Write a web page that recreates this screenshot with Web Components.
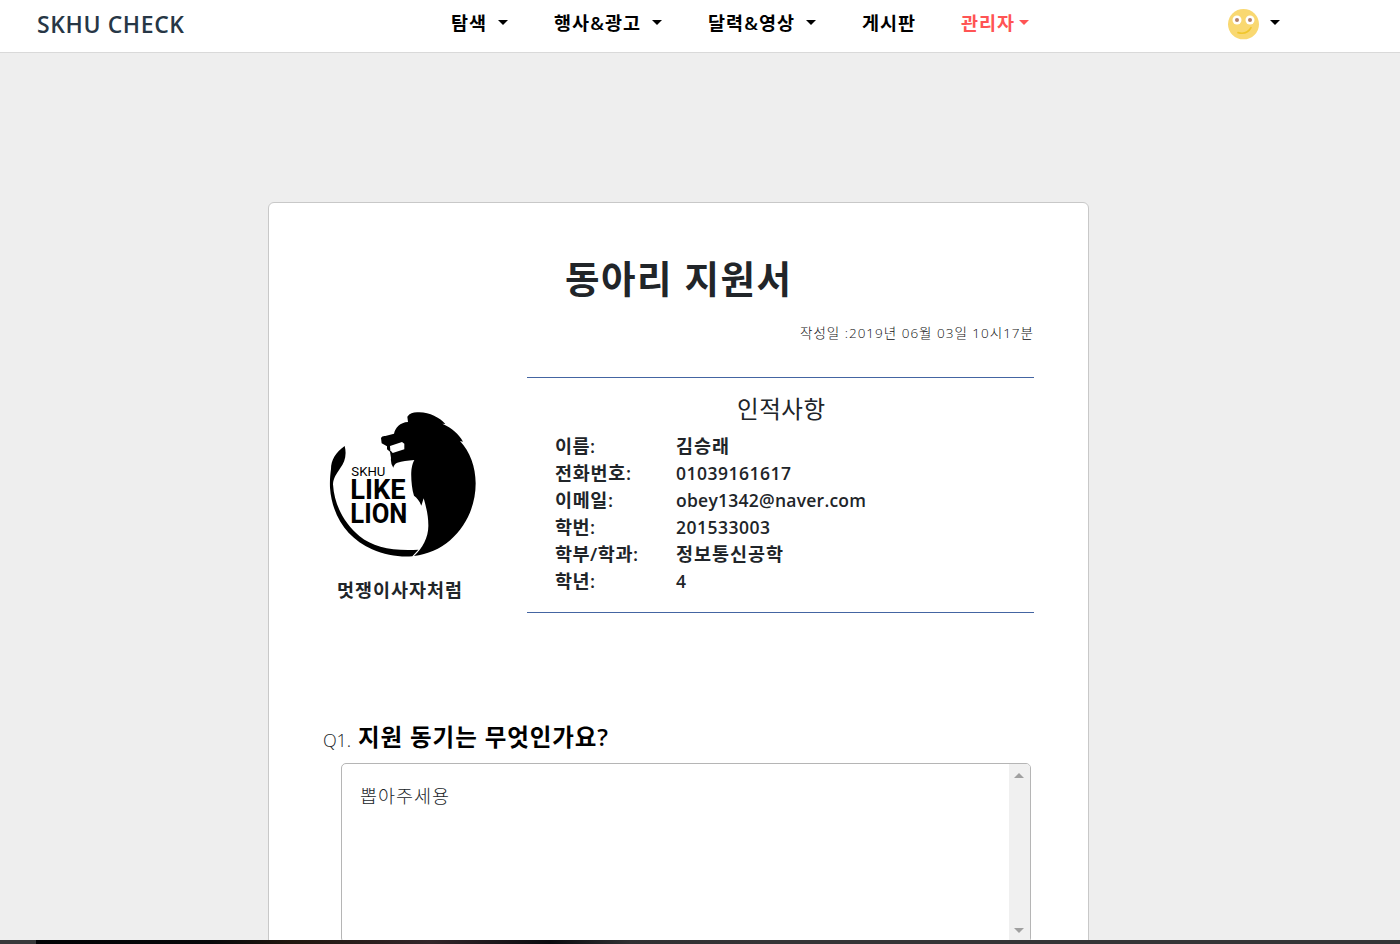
<!DOCTYPE html>
<html lang="ko">
<head>
<meta charset="utf-8">
<title>SKHU CHECK</title>
<style>
html,body{margin:0;height:944px;overflow:hidden;background:#eee}
body{font-family:"Open Sans","Noto Sans CJK KR",sans-serif;color:#212529}
</style>
</head>
<body>
<club-page></club-page>
<script>
// One line of text, tracked so that it fills the given width.
class FitText extends HTMLElement{
  connectedCallback(){
    if(this.shadowRoot)return;
    const r=this.attachShadow({mode:'open'});
    r.innerHTML='<style>:host{display:block;flex:none;white-space:nowrap}span{display:inline-block}</style><span><slot></slot></span>';
    const s=r.querySelector('span'),w=+this.getAttribute('w'),n=this.textContent.length;
    this.style.width=w+'px';
    const natural=s.getBoundingClientRect().width;
    if(natural&&n>1)s.style.letterSpacing=((w-natural)/(n-1))+'px';
  }
}
class CaretMark extends HTMLElement{
  connectedCallback(){
    this.attachShadow({mode:'open'}).innerHTML=`<style>:host{display:block;flex:none;width:0;height:0;border:5px solid transparent;border-top-color:currentColor;border-bottom:0}</style>`;
  }
}
class NavItem extends HTMLElement{
  connectedCallback(){
    const c=this.getAttribute('caret');
    this.attachShadow({mode:'open'}).innerHTML=`<style>:host{display:flex;align-items:center;height:45px;flex:none;font:600 18.500px/45px "Open Sans","Noto Sans CJK KR",sans-serif;color:#000}caret-mark{margin-left:${c}px}</style><slot></slot>${c?'<caret-mark></caret-mark>':''}`;
  }
}
class SmileAvatar extends HTMLElement{
  connectedCallback(){
    this.attachShadow({mode:'open'}).innerHTML=`<style>:host{display:block;flex:none;width:31px;height:31px}svg{display:block}</style>
<svg width="31" height="31" viewBox="0 0 93 93"><ellipse cx="46.500" cy="45.500" rx="46.500" ry="45.500" fill="#f9d871"/><circle cx="27" cy="33" r="13.500" fill="#fff"/><circle cx="66" cy="33" r="13.500" fill="#fff"/><circle cx="27" cy="33" r="6" fill="#b38069"/><circle cx="66" cy="33" r="6" fill="#b38069"/><path d="M30 71Q57 78 69 56" fill="none" stroke="#f0c62c" stroke-width="5" stroke-linecap="round"/></svg>`;
  }
}
class TopBar extends HTMLElement{
  connectedCallback(){
    this.attachShadow({mode:'open'}).innerHTML=`<style>
:host{display:flex;height:52px;background:#fff;border-bottom:1px solid #d9d9d9;align-items:flex-start}
.brand{margin-left:37px;width:414px;font:600 23px/49px "Open Sans";color:#273746;flex:none}
.g{margin-left:46px}.admin{color:#ff5454;margin-left:46px}
smile-avatar{margin:9px 11px 0 199px}.me{margin-top:20px;color:#000}
</style>
<div class="brand"><fit-text w="147">SKHU CHECK</fit-text></div>
<nav-item caret="12"><fit-text w="35">탐색</fit-text></nav-item>
<nav-item class="g" caret="12"><fit-text w="86">행사&amp;광고</fit-text></nav-item>
<nav-item class="g" caret="12"><fit-text w="86">달력&amp;영상</fit-text></nav-item>
<nav-item class="g"><fit-text w="53">게시판</fit-text></nav-item>
<nav-item class="admin" caret="5"><fit-text w="53">관리자</fit-text></nav-item>
<smile-avatar></smile-avatar><caret-mark class="me"></caret-mark>`;
  }
}
class LionLogo extends HTMLElement{
  connectedCallback(){
    this.attachShadow({mode:'open'}).innerHTML=`<style>:host{display:block;width:150px;height:150px}svg{display:block}text{font-family:Roboto,sans-serif}</style>
<svg width="150" height="150" viewBox="54 30 450 450">
<path d="M292 50C300 38 312 36 328 37C360 38 388 52 406 72L397 71C426 84 446 101 459 125L450 123C480 155 497 200 497 250C497 360 420 456 312 468C338 445 356 410 355 375C355 345 348 320 341 295L334 317C328 302 321 293 312 287C304 262 302 222 305 205C307 192 310 186 313 180C292 182 276 184 262 188Q252 192 250 203Q241 191 243 174L240 155L231 148L231 139L215 130L213 114Q216 107 226 108L252 101C256 84 270 67 294 66Z"/>
<path d="M240 138L276 126L283 131L283 148L248 159L241 151Z" fill="#fff"/>
<path d="M104 138C111 165 104 187 91 204C79 222 70 234 69 253C73 318 104 370 148 408C190 442 250 454 325 449L307 469C270 472 226 466 186 448C115 417 66 350 60 263C59 240 61 222 63 207C63 180 77 157 104 138Z"/>
<text x="124" y="228" font-size="41" textLength="102" lengthAdjust="spacingAndGlyphs">SKHU</text>
<text x="121" y="298" font-size="82" font-weight="700" textLength="166" lengthAdjust="spacingAndGlyphs">LIKE</text>
<text x="121" y="368" font-size="83" font-weight="700" textLength="171" lengthAdjust="spacingAndGlyphs">LION</text>
</svg>`;
  }
}
class InfoRow extends HTMLElement{
  connectedCallback(){
    this.attachShadow({mode:'open'}).innerHTML=`<style>:host{display:grid;grid-template-columns:121px auto;justify-content:start;height:27px;font:600 18.500px/26px "Open Sans","Noto Sans CJK KR",sans-serif}:host([latin]) slot:not([name])::slotted(*){font-size:17.500px;line-height:27px}</style><slot name="label"></slot><slot></slot>`;
  }
}
class PersonInfo extends HTMLElement{
  connectedCallback(){
    const rows=[['이름:',40,'김승래',53],['전화번호:',76,'01039161617',115],['이메일:',58,'obey1342@naver.com',190],['학번:',40,'201533003',94],['학부/학과:',83,'정보통신공학',107],['학년:',40,'4',10]];
    this.attachShadow({mode:'open'}).innerHTML=`<style>:host{display:block;box-sizing:border-box;width:507px;height:236px;border-top:1px solid #4465a2;border-bottom:1px solid #4465a2;padding:14px 0 0 28px}
.head{font-size:23.500px;line-height:35px;height:41px;padding-left:182px}</style>
<div class="head"><fit-text w="88">인적사항</fit-text></div>
${rows.map(([a,aw,b,bw])=>`<info-row${/^[\x00-\x7f]+$/.test(b)?' latin':''}><fit-text slot="label" w="${aw}">${a}</fit-text><fit-text w="${bw}">${b}</fit-text></info-row>`).join('')}`;
  }
}
class AnswerBox extends HTMLElement{
  connectedCallback(){
    this.attachShadow({mode:'open'}).innerHTML=`<style>:host{display:flex;justify-content:space-between;box-sizing:border-box;width:690px;height:180px;border:1px solid #b5b5b5;border-radius:5px;overflow:hidden;background:#fff}
.t{padding:17px 0 0 18px;font-size:18.500px;line-height:29px;font-weight:300}
.bar{width:21px;background:#f0f0f0;display:flex;flex-direction:column;justify-content:space-between;align-items:flex-start;padding:9px 0 9px 5px;box-sizing:border-box;color:#a0a0a0}
.up{transform:rotate(180deg)}</style>
<div class="t"><slot></slot></div><div class="bar"><caret-mark class="up"></caret-mark><caret-mark></caret-mark></div>`;
  }
}
class ApplyCard extends HTMLElement{
  connectedCallback(){
    this.attachShadow({mode:'open'}).innerHTML=`<style>
:host{display:block;box-sizing:border-box;width:821px;height:780px;margin:149px 0 0 268px;border:1px solid #c8c8c8;border-radius:6px;background:#fff}
h1{margin:0;padding:47px 0 0 296px;font-size:37.500px;line-height:58px;font-weight:700;height:58px}
.date{display:flex;justify-content:flex-end;padding:14px 55px 0 0;font-size:13.500px;line-height:22px;font-weight:300;color:#111;height:22px}
.mid{display:flex;margin-top:33px;height:236px}
.club{width:199px;padding:33px 0 0 59px;box-sizing:content-box;flex:none}
.club div{font-weight:600;font-size:18.500px;line-height:28px;padding:16px 0 0 9px}
.q{display:flex;align-items:baseline;margin:104px 0 0 54px;height:46px;line-height:40px}
.n{font-size:18px;font-weight:300;margin-right:7px;padding-top:1px;transform:translateY(1px)}.qt{font-size:23.500px;font-weight:600;color:#000}
answer-box{margin-left:72px}
</style>
<h1><fit-text w="226">동아리 지원서</fit-text></h1>
<div class="date"><fit-text w="233">작성일 :2019년 06월 03일 10시17분</fit-text></div>
<div class="mid"><div class="club"><lion-logo></lion-logo><div><fit-text w="125">멋쟁이사자처럼</fit-text></div></div><person-info></person-info></div>
<div class="q"><fit-text class="n" w="28">Q1.</fit-text><fit-text class="qt" w="250">지원 동기는 무엇인가요?</fit-text></div>
<answer-box><fit-text w="89">뽑아주세용</fit-text></answer-box>`;
  }
}
class TaskStrip extends HTMLElement{
  connectedCallback(){
    this.attachShadow({mode:'open'}).innerHTML=`<style>:host{display:block;height:4px;background:linear-gradient(90deg,#38383a 0 36px,#020204 36px,#08080a 210px,#21170f 290px,#33262a 430px,#0b0b0f 550px,#303032 630px,#353436 760px,#353436)}</style>`;
  }
}
class ClubPage extends HTMLElement{
  connectedCallback(){
    this.attachShadow({mode:'open'}).innerHTML=`<style>:host{display:grid;grid-template-rows:940px 4px;height:944px}main{overflow:hidden;min-height:0}</style><main><top-bar></top-bar><apply-card></apply-card></main><task-strip></task-strip>`;
  }
}
for(const [n,c] of [['caret-mark',CaretMark],['nav-item',NavItem],['smile-avatar',SmileAvatar],['top-bar',TopBar],['lion-logo',LionLogo],['info-row',InfoRow],['person-info',PersonInfo],['answer-box',AnswerBox],['apply-card',ApplyCard],['task-strip',TaskStrip],['club-page',ClubPage],['fit-text',FitText]])customElements.define(n,c);
</script>
</body>
</html>
